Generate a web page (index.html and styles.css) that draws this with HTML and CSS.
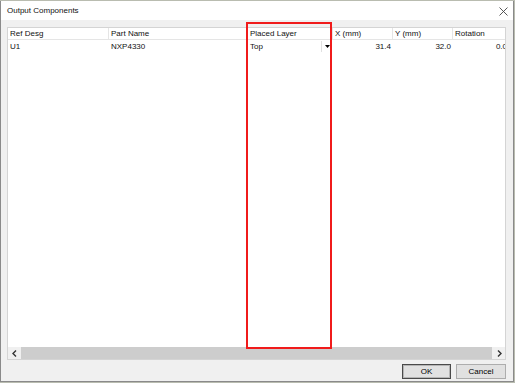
FILE: index.html
```html
<!DOCTYPE html>
<html lang="en">
  <head>
    <meta charset="UTF-8" />
    <title>Output Components</title>
    <link rel="stylesheet" href="styles.css">
  </head>
  <body>
    <div class="dialog">
      <div class="titlebar">
        <span class="title">Output Components</span>
        <svg class="close" width="9" height="9" viewBox="0 0 9 9">
          <path d="M0.5 0.5 L8.5 8.5 M8.5 0.5 L0.5 8.5" stroke="#444" stroke-width="0.9" fill="none" />
        </svg>
      </div>

      <div class="content">
        <div class="list">
          <div class="grid">
            <div class="head">Ref Desg</div>
            <div class="head">Part Name</div>
            <div class="head">Placed Layer</div>
            <div class="head">X (mm)</div>
            <div class="head">Y (mm)</div>
            <div class="head">Rotation</div>

            <div class="cell">U1</div>
            <div class="cell">NXP4330</div>
            <div class="cell combo">
              <span>Top</span>
              <span class="drop">
                <svg width="5" height="3" viewBox="0 0 5 3"><path d="M0 0 H5 L2.5 3 Z" fill="#000" /></svg>
              </span>
            </div>
            <div class="cell num">31.4</div>
            <div class="cell num">32.0</div>
            <div class="cell num clip">0.0</div>
          </div>

          <div class="hscroll">
            <span class="arrow">
              <svg width="5" height="7" viewBox="0 0 5 7"><path d="M4 0.5 L1 3.5 L4 6.5" stroke="#333" stroke-width="1.4" fill="none" /></svg>
            </span>
            <span class="thumb"></span>
            <span class="arrow">
              <svg width="5" height="7" viewBox="0 0 5 7"><path d="M1 0.5 L4 3.5 L1 6.5" stroke="#333" stroke-width="1.4" fill="none" /></svg>
            </span>
          </div>
        </div>

        <div class="buttons">
          <button class="btn default">OK</button>
          <button class="btn">Cancel</button>
        </div>
      </div>

      <div class="highlight"></div>
    </div>
  </body>
</html>
```

FILE: styles.css
```css
* {
  margin: 0;
  padding: 0;
  box-sizing: border-box;
}

body {
  background: #b9bcb0;
  font-family: "Liberation Sans", Arial, sans-serif;
  font-size: 8px;
  color: #111;
  overflow: hidden;
}

.dialog {
  position: relative;
  margin-top: 1px;
  width: 514px;
  height: 381px;
  border: 1px solid #8a8a8a;
  border-top: none;
  display: flex;
  flex-direction: column;
  background: #f0f0f0;
}

.titlebar {
  height: 19px;
  background: #fff;
  display: flex;
  align-items: center;
  justify-content: space-between;
  padding: 0 5px 0 6px;
}

.close {
  margin-top: 2px;
}

.content {
  flex: 1;
  display: flex;
  flex-direction: column;
  padding: 7px 7px 2px 6px;
}

.list {
  height: 333px;
  background: #fff;
  border: 1px solid #d4d4d4;
  display: flex;
  flex-direction: column;
  overflow: hidden;
}

.grid {
  flex: 1;
  display: grid;
  grid-template-columns: 101px 139px 85px 60px 60px 100px;
  grid-auto-rows: 12px 13px;
  align-content: start;
}

.head {
  height: 12px;
  line-height: 12px;
  padding-left: 2px;
  border-right: 1px solid #e5e5e5;
  border-bottom: 1px solid #e5e5e5;
  white-space: nowrap;
}

.cell {
  height: 13px;
  line-height: 13px;
  padding-left: 2px;
  white-space: nowrap;
}

.num {
  text-align: right;
  padding-right: 2px;
}

.clip {
  padding-right: 0;
  margin-right: 46px;
}

.combo {
  display: flex;
  justify-content: space-between;
  padding-right: 1px;
}

.drop {
  width: 11px;
  height: 11px;
  margin-top: 1px;
  border-left: 1px solid #e0e0e0;
  display: flex;
  align-items: center;
  justify-content: center;
}

.hscroll {
  height: 12px;
  display: flex;
  align-items: stretch;
  background: #f0f0f0;
}

.arrow {
  width: 12px;
  display: flex;
  align-items: center;
  justify-content: center;
}

.thumb {
  flex: 1;
  background: #cdcdcd;
  margin: 0 1px;
}

.buttons {
  margin-top: 4px;
  display: flex;
  justify-content: flex-end;
  gap: 5px;
}

.btn {
  width: 49px;
  height: 15px;
  font-family: "Liberation Sans", Arial, sans-serif;
  font-size: 8px;
  background: #e1e1e1;
  border: 1px solid #adadad;
}

.btn.default {
  border: 1px solid #4a4a4a;
  box-shadow: inset 0 0 0 1px #b5b5b5;
}

.btn + .btn {
  width: 50px;
}

.highlight {
  position: absolute;
  left: 245px;
  top: 21px;
  width: 86px;
  height: 327px;
  border: 2px solid #f01b1b;
}
```
